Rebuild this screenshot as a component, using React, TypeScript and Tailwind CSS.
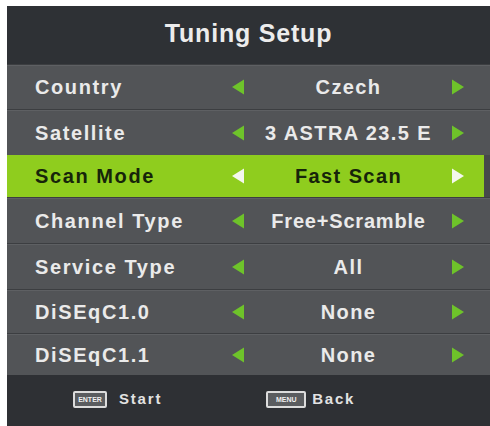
const rows = [
  { label: "Country", value: "Czech", h: "h-[45px]" },
  { label: "Satellite", value: "3 ASTRA 23.5 E", h: "h-[46px]" },
  { label: "Scan Mode", value: "Fast Scan", h: "h-[42px]", active: true },
  { label: "Channel Type", value: "Free+Scramble", h: "h-[46px]", tight: true },
  { label: "Service Type", value: "All", h: "h-[46px]" },
  { label: "DiSEqC1.0", value: "None", h: "h-[44px]" },
  { label: "DiSEqC1.1", value: "None", h: "h-[42px]" },
];

function Arrow({ dir, active }: { dir: "left" | "right"; active?: boolean }) {
  const fill = active ? "#f4f7ee" : "#6ec32a";
  return (
    <svg width="16" height="18" viewBox="0 0 16 18" className="block">
      {dir === "left" ? (
        <polygon points="14,1.5 14,16.5 2,9" fill={fill} />
      ) : (
        <polygon points="2,1.5 2,16.5 14,9" fill={fill} />
      )}
    </svg>
  );
}

function Key({ label, w }: { label: string; w: string }) {
  return (
    <span
      className={`${w} flex h-[17px] items-center justify-center rounded-[2px] border-2 border-[#dcdcdc] bg-[#5a5c5f] text-[7px] font-bold leading-none tracking-[0px] text-[#f0f0f0]`}
    >
      {label}
    </span>
  );
}

export default function App() {
  return (
    <div
      className="h-[426px] w-[490px] overflow-hidden bg-white pl-[7px] pt-[6px]"
      style={{ fontFamily: '"Liberation Sans", Arial, sans-serif' }}
    >
      <div className="flex h-[420px] w-[483px] flex-col bg-[#46484b]">
        <div className="flex h-[58px] items-center justify-center bg-[#2e3135] pb-[2px] text-[25px] font-bold tracking-[0.8px] text-[#ececec]">
          Tuning Setup
        </div>

        {rows.map((row) => (
          <div
            key={row.label}
            className={
              row.active
                ? `${row.h} mr-[6px] grid grid-cols-[195px_17px_203px_17px] items-center bg-[#8fcd1e] pl-[28px] text-[#16240a]`
                : `${row.h} grid grid-cols-[195px_17px_203px_17px] items-center border-t border-[#3c3e41] bg-[#525457] pl-[28px] text-[#eaeaea] shadow-[inset_0_1px_0_#5e6063]`
            }
          >
            <span className="text-[20px] font-bold tracking-[1.6px] whitespace-nowrap">
              {row.label}
            </span>
            <Arrow dir="left" active={row.active} />
            <span
              className={
                row.tight
                  ? "text-center text-[20px] font-bold tracking-[0.8px] whitespace-nowrap"
                  : "text-center text-[20px] font-bold tracking-[1.4px] whitespace-nowrap"
              }
            >
              {row.value}
            </span>
            <Arrow dir="right" active={row.active} />
          </div>
        ))}

        <div className="flex flex-1 items-center bg-[#2e3034] pb-[2px] text-[15px] font-bold tracking-[1.8px] text-[#e2e2e2]">
          <div className="ml-[66px] flex items-center gap-[12px]">
            <Key label="ENTER" w="w-[34px]" />
            <span>Start</span>
          </div>
          <div className="ml-[104px] flex items-center gap-[6px]">
            <Key label="MENU" w="w-[40px]" />
            <span>Back</span>
          </div>
        </div>
      </div>
    </div>
  );
}
